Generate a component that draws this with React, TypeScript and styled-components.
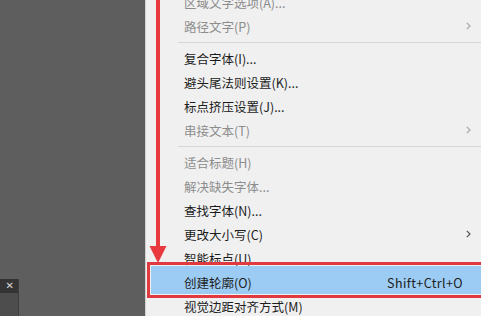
import React from "react";
import styled, { createGlobalStyle } from "styled-components";

const Global = createGlobalStyle`
  html, body { margin: 0; padding: 0; height: 100%; overflow: hidden; }
  #root { height: 100%; }
`;

const Screen = styled.div`
  display: flex;
  height: 316px;
  width: 481px;
  overflow: hidden;
  font-family: "Noto Sans CJK SC", "Noto Sans", sans-serif;
`;

const Workspace = styled.div`
  width: 145px;
  flex: none;
  background: #5e5e5e;
  display: flex;
  flex-direction: column;
  justify-content: flex-end;
`;

const MiniPanel = styled.div`
  width: 18px;
  height: 37px;
  display: flex;
  flex-direction: column;
  background: #4d4d4d;
  border-right: 1px solid #3e3e3e;
`;

const MiniHeader = styled.div`
  height: 14px;
  background: #343434;
  display: flex;
  align-items: center;
  justify-content: flex-end;
  padding-right: 4px;
  color: #d8d8d8;
  font-family: "DejaVu Sans", sans-serif;
  font-size: 10px;
  line-height: 1;
`;

const Menu = styled.div`
  position: relative;
  flex: 1;
  background: #f0f0f0;
  border-left: 1px solid #d0d0d0;
  overflow: hidden;
`;

const List = styled.div`
  display: flex;
  flex-direction: column;
  margin-top: -10px;
`;

const Row = styled.div<{ $disabled?: boolean; $active?: boolean }>`
  position: relative;
  z-index: 0;
  height: 24px;
  display: flex;
  align-items: center;
  padding: 0 18px 0 38px;
  font-size: 12.5px;
  color: ${(p) => (p.$disabled ? "#8d8d8d" : "#1c1c1c")};
  white-space: nowrap;

  ${(p) =>
    p.$active &&
    `
    &::before {
      content: "";
      position: absolute;
      z-index: -1;
      top: -4px;
      bottom: 0;
      left: 5px;
      right: 0;
      background: #9ccbf3;
    }
    &::after {
      content: "";
      position: absolute;
      top: -8px;
      bottom: -4px;
      left: 1px;
      right: -6px;
      border: 3.5px solid #e03a40;
    }
  `}
`;

const Label = styled.span`
  flex: 1;
`;

const Shortcut = styled.span`
  letter-spacing: 0.4px;
  color: #1c1c1c;
`;

const Chevron = styled.svg<{ $disabled?: boolean }>`
  width: 5px;
  height: 8px;
  margin-right: -8px;
  stroke: ${(p) => (p.$disabled ? "#a8a8a8" : "#555")};
`;

const Separator = styled.div`
  height: 8px;
  display: flex;
  align-items: center;
  padding-left: 32px;

  &::after {
    content: "";
    flex: 1;
    height: 1px;
    background: #d6d6d6;
  }
`;

const Arrow = styled.svg`
  position: absolute;
  left: 0;
  top: 0;
  width: 30px;
  height: 270px;
  pointer-events: none;
`;

type Item =
  | { sep: true }
  | {
      sep?: false;
      label: string;
      disabled?: boolean;
      sub?: boolean;
      shortcut?: string;
      active?: boolean;
    };

const items: Item[] = [
  { label: "区域文字选项(A)...", disabled: true },
  { label: "路径文字(P)", disabled: true, sub: true },
  { sep: true },
  { label: "复合字体(I)..." },
  { label: "避头尾法则设置(K)..." },
  { label: "标点挤压设置(J)..." },
  { label: "串接文本(T)", disabled: true, sub: true },
  { sep: true },
  { label: "适合标题(H)", disabled: true },
  { label: "解决缺失字体...", disabled: true },
  { label: "查找字体(N)..." },
  { label: "更改大小写(C)", sub: true },
  { label: "智能标点(U)..." },
  { label: "创建轮廓(O)", shortcut: "Shift+Ctrl+O", active: true },
  { label: "视觉边距对齐方式(M)" },
];

export default function App() {
  return (
    <>
      <Global />
      <Screen>
        <Workspace>
          <MiniPanel>
            <MiniHeader>✕</MiniHeader>
          </MiniPanel>
        </Workspace>
        <Menu>
          <List>
            {items.map((it, i) =>
              it.sep ? (
                <Separator key={i} />
              ) : (
                <Row key={i} $disabled={it.disabled} $active={it.active}>
                  <Label>{it.label}</Label>
                  {it.shortcut && <Shortcut>{it.shortcut}</Shortcut>}
                  {it.sub && (
                    <Chevron $disabled={it.disabled} viewBox="0 0 5 8" fill="none" strokeWidth="1.2">
                      <path d="M0.8 0.8 L4 4 L0.8 7.2" />
                    </Chevron>
                  )}
                </Row>
              )
            )}
          </List>
          <Arrow viewBox="0 0 30 270">
            <rect x="10" y="0" width="4" height="250" fill="#e8393e" />
            <polygon points="3.5,246 20.5,246 12,263" fill="#e8393e" />
          </Arrow>
        </Menu>
      </Screen>
    </>
  );
}
